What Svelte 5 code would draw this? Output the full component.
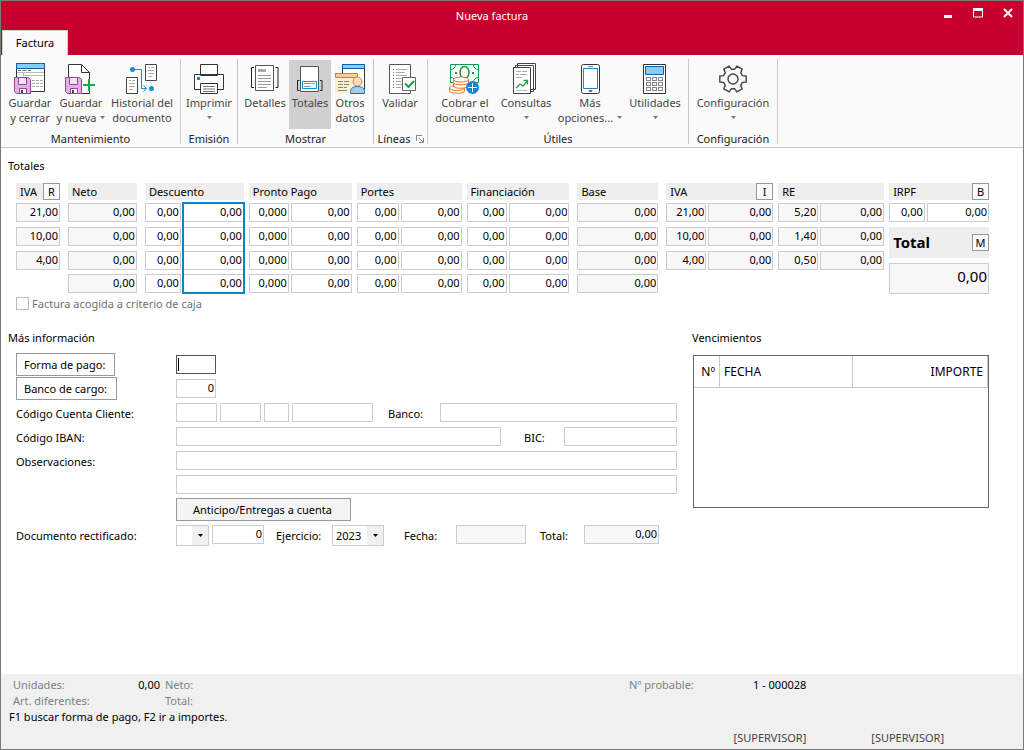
<script>
  const ribbon = [
    { name: 'Mantenimiento', pad: '0 2px 0 3px', items: [
      { icon: 'saveClose', lines: ['Guardar', 'y cerrar'], w: 52 },
      { icon: 'saveNew', lines: ['Guardar', 'y nueva'], w: 50, arrow: true },
      { icon: 'history', lines: ['Historial del', 'documento'], w: 72 }
    ] },
    { name: 'Emisión', pad: '0', items: [
      { icon: 'print', lines: ['Imprimir', ''], w: 56, arrow: true }
    ] },
    { name: 'Mostrar', pad: '0 4px 0 3px', items: [
      { icon: 'details', lines: ['Detalles'], w: 48 },
      { icon: 'totals', lines: ['Totales'], w: 42, active: true },
      { icon: 'other', lines: ['Otros', 'datos'], w: 38 }
    ] },
    { name: 'Líneas', pad: '0 1px 0 0', launcher: true, items: [
      { icon: 'validate', lines: ['Validar'], w: 52 }
    ] },
    { name: 'Útiles', pad: '0 8px 0 0', items: [
      { icon: 'cash', lines: ['Cobrar el', 'documento'], w: 74 },
      { icon: 'reports', lines: ['Consultas', ''], w: 48, arrow: true },
      { icon: 'phone', lines: ['Más', 'opciones...'], w: 80, arrow: true },
      { icon: 'calc', lines: ['Utilidades', ''], w: 50, arrow: true }
    ] },
    { name: 'Configuración', pad: '0', items: [
      { icon: 'gear', lines: ['Configuración', ''], w: 88, arrow: true }
    ] }
  ];

  const zeros = ['0,00', '0,00', '0,00', '0,00'];
  const groups = [
    { title: 'IVA', key: 'R', w: 44, cols: [{ w: 44, ro: true, v: ['21,00', '10,00', '4,00'] }] },
    { title: 'Neto', w: 69, wide: true, cols: [{ w: 69, ro: true, v: zeros }] },
    { title: 'Descuento', w: 99, wide: true, cols: [{ w: 36, v: zeros }, { w: 61, v: zeros, marked: true }] },
    { title: 'Pronto Pago', w: 103, cols: [{ w: 40, v: ['0,000', '0,000', '0,000', '0,000'] }, { w: 61, v: zeros }] },
    { title: 'Portes', w: 105, cols: [{ w: 42, v: zeros }, { w: 61, v: zeros }] },
    { title: 'Financiación', w: 103, cols: [{ w: 40, v: zeros }, { w: 61, v: zeros }] },
    { title: 'Base', w: 81, wide: true, cols: [{ w: 81, ro: true, v: zeros }] },
    { title: 'IVA', key: 'I', w: 107, wide: true, cols: [{ w: 40, ro: true, v: ['21,00', '10,00', '4,00'] }, { w: 65, ro: true, v: zeros.slice(1) }] },
    { title: 'RE', w: 106, cols: [{ w: 40, ro: true, v: ['5,20', '1,40', '0,50'] }, { w: 64, ro: true, v: zeros.slice(1) }] },
    { title: 'IRPF', key: 'B', w: 100, total: true, cols: [{ w: 36, v: ['0,00'] }, { w: 63, v: ['0,00'] }] }
  ];

  function gearPath() {
    const pts = [];
    for (let i = 0; i < 6; i++) {
      for (const [r, off] of [[10, -20], [13.5, -13], [13.5, 13], [10, 20]]) {
        const a = ((i * 60 + off) * Math.PI) / 180;
        pts.push(`${(16 + r * Math.cos(a)).toFixed(1)} ${(16 + r * Math.sin(a)).toFixed(1)}`);
      }
    }
    return `M${pts.join('L')}Z`;
  }
  const gear = gearPath();
</script>

{#snippet floppy()}
  <path d="M.5 14.5h14l2 2v14H2.5l-2-2z" fill="#deb4de" stroke="#98429c" />
  <path d="M4.500 14.500h8v7h-8z" fill="#f6e4f6" stroke="#98429c" />
  <path d="M5.500 25.500h7v5h-7z" fill="#fff" stroke="#98429c" />
  <path d="M7 27h2v3H7z" fill="#444" />
{/snippet}

{#snippet icon(name)}
  <svg class="icon" viewBox="0 0 32 32" width="32" height="32" fill="none" aria-hidden="true">
    {#if name === 'saveClose'}
      <path d="M2.500 .5h28v28h-28z" fill="#fff" stroke="#333" />
      <path d="M2.500 .5h28v5h-28z" fill="#90c8f0" stroke="#0a64ac" />
      <path d="M4 7.500h3m1.500 0h4m1.500 0h3" stroke="#777" />
      <path d="M3 9.500h27M9.500 9.500v4M9.500 12.500h20" stroke="#bbb" />
      <path d="M18 17.500h3m1 0h3m1 0h3M18 20.500h3m1 0h3m1 0h3M18 23.500h3m1 0h3m1 0h3" stroke="#aaa" />
      {@render floppy()}
    {:else if name === 'saveNew'}
      <path d="M3.500 14V1.500h13l8 8V30.500H17V14z" fill="#fff" />
      <path d="M3.500 14V1.500h13l8 8V18M16.500 1.500v8h8M17 30.500h7.500V28" stroke="#333" />
      {@render floppy()}
      <path d="M24 16v12M18 22h12" stroke="#1aa64c" stroke-width="2" />
    {:else if name === 'history'}
      <path d="M19.500 1.500h11v16h-11zM.500 14.500h11v16H.500z" fill="#fff" stroke="#444" />
      <path d="M22 4.500h2m1 0h3M22 7.500h6M22 10.500h6M22 13.500h4M3 17.500h2m1 0h3M3 20.500h6M3 23.500h6M3 26.500h4" stroke="#aaa" />
      <path d="M6 6.500h9.500v19h5M17.500 22.500l3 3-3 3" stroke="#0095dc" />
      <circle cx="6.500" cy="6.500" r="2.500" fill="#0095dc" /><circle cx="25.500" cy="25.500" r="2.500" fill="#0095dc" />
    {:else if name === 'print'}
      <path d="M7.500 1.500h17v11h-17zM1.500 11.500h29v15h-29z" fill="#fff" stroke="#333" />
      <path d="M7.500 20.500h17v10h-17z" fill="#fff" stroke="#333" />
      <path d="M10 23.500h12M10 26h12M10 28.500h12" stroke="#777" />
      <path d="M4 14h3v3H4z" fill="#1884cc" />
    {:else if name === 'details'}
      <path d="M6.500 2.500h18v25h-18z" fill="#fff" stroke="#555" />
      <path d="M9 6h8v3H9z" fill="#aaa" />
      <path d="M9 12.500h13M9 15.500h13M9 18.500h13M9 21.500h13M9 24.500h9" stroke="#999" />
      <path d="M5 4.500H2.500v20H5M26.500 4.500H29v20h-2.500" stroke="#222" />
    {:else if name === 'totals'}
      <path d="M6.500 3.500h18v25h-18z" fill="#fff" stroke="#555" />
      <path d="M8.500 18.500h14v7h-14z" fill="#fff" stroke="#0098dc" />
      <path d="M10 20.500h11M10 23.500h7" stroke="#999" />
      <path d="M5.500 17.500h-2v10h2M26 17.500h2v10h-2" stroke="#222" />
    {:else if name === 'other'}
      <path d="M8.500 1.500h22v25h-22z" fill="#fff" stroke="#333" />
      <path d="M8.500 1.500h22v4h-22z" fill="#90c8f0" stroke="#0a64ac" />
      <path d="M1 10h23v20H1z" fill="#fcf0d0" />
      <path d="M1.500 10.500h22v4h-22z" fill="#fccb90" stroke="#e07828" />
      <path d="M4 18.500h5m1 0h5M4 21.500h5m1 0h5M4 24.500h5m1 0h3M4 27.500h9" stroke="#8a8474" />
      <path d="M16.500 30.500v-2c0-3 2.500-5 7-5s7 2 7 5v2z" fill="#a4ccec" stroke="#1670b4" />
      <circle cx="23.500" cy="18.500" r="4.500" fill="#fcdcb8" stroke="#c08860" />
    {:else if name === 'validate'}
      <path d="M5.500 1.500h21v29h-21z" fill="#fff" stroke="#555" />
      <path d="M9 6.500h1M9 15.500h1M9 24.500h1" stroke="#d03030" />
      <path d="M9 9.500h1M9 12.500h1M9 18.500h1M9 21.500h1" stroke="#28a050" />
      <path d="M12 6.500h11M12 9.500h9M12 12.500h11M12 15.500h6M12 18.500h5M12 21.500h6M12 24.500h5" stroke="#aaa" />
      <path d="M18.500 14.500h13v13h-13z" fill="#fff" stroke="#666" />
      <path d="M21 20.500l3.500 3.500 5.500-6" stroke="#18a048" stroke-width="2" />
    {:else if name === 'cash'}
      <path d="M1.500 1.500h28v18h-28z" fill="#fff" stroke="#129848" />
      <path d="M1.500 6.500c3 0 5-2 5-5M29.500 6.500c-3 0-5-2-5-5M1.500 14.500c3 0 5 2 5 5M29.500 14.500c-3 0-5 2-5 5" stroke="#129848" />
      <ellipse cx="15.500" cy="9.500" rx="4.500" ry="6" stroke="#129848" stroke-width="1.500" />
      <path d="M6 9h2v2H6zM23 9h2v2h-2z" fill="#129848" />
      <g fill="#fff" stroke="#ec7424">
        <path d="M.500 25v3c0 3 15 3 15 0v-3z" /><ellipse cx="8" cy="25" rx="7.500" ry="2.500" />
        <path d="M4.500 20.500v2.500c0 3 14 3 14 0v-2.500z" /><path d="M4.500 16.500v3c0 3 15 3 15 0v-3z" />
        <ellipse cx="12" cy="16.500" rx="7.500" ry="2.500" />
      </g>
      <circle cx="23.500" cy="24.500" r="6.500" fill="#1884cc" />
      <path d="M23.500 20v9M19 24.500h9" stroke="#fff" />
    {:else if name === 'reports'}
      <path d="M7.500 .5h18v26h-18zM5.500 2.500h18v26h-18z" fill="#fff" stroke="#444" />
      <path d="M3.500 4.500h17v26h-17z" fill="#fff" stroke="#444" />
      <path d="M6 8.500h5m1 0h5M6 11.500h3m1 0h7M6 14.500h6" stroke="#aaa" />
      <path d="M6 25l4-4 3 2 4.500-5M13.500 17.500h4v4" stroke="#22a03c" stroke-width="1.300" />
      <path d="M6 27.500h11" stroke="#bbb" />
    {:else if name === 'phone'}
      <rect x="7.500" y="1.500" width="18" height="29" rx="2" fill="#fff" stroke="#333" />
      <path d="M9.500 5.500h14v20h-14z" stroke="#1884cc" />
      <path d="M14 3.500h5" stroke="#888" /><path d="M15 27.500h3v1h-3z" stroke="#777" />
    {:else if name === 'calc'}
      <path d="M4.500 1.500h22v29h-22z" fill="#fff" stroke="#333" />
      <path d="M6.500 3.500h18v8h-18z" fill="#90c8f0" stroke="#0a64ac" />
      {#each [14.5, 19.5, 24.5] as y}
        {#each [7.5, 13.5, 19.5] as x}
          <rect {x} {y} width="4" height="3" stroke="#888" />
        {/each}
      {/each}
    {:else if name === 'gear'}
      <path d={gear} stroke="#444" stroke-width="1.400" stroke-linejoin="round" />
      <circle cx="16" cy="16" r="5" stroke="#444" stroke-width="1.400" />
    {/if}
  </svg>
{/snippet}

{#snippet dropArrow()}
  <svg class="arrow" viewBox="0 0 5 3" width="5" height="3" aria-hidden="true"><path d="M0 0h5L2.500 3z" fill="currentColor" /></svg>
{/snippet}

<div class="window">
  <header>
    <div class="titlebar">
      <h1>Nueva factura</h1>
      <div class="controls">
        <button aria-label="Minimizar"><svg viewBox="0 0 10 10" width="10" height="10"><path d="M1 8.500h8" stroke="#fff" stroke-width="3" /></svg></button>
        <button aria-label="Maximizar"><svg viewBox="0 0 10 10" width="10" height="10"><path d="M.5 1h9v8h-9z" fill="none" stroke="#fff" /><path d="M0 1.500h10" stroke="#fff" stroke-width="3" /></svg></button>
        <button aria-label="Cerrar"><svg viewBox="0 0 10 10" width="10" height="10"><path d="M1 1l8 8M9 1L1 9" stroke="#fff" stroke-width="2" /></svg></button>
      </div>
    </div>
    <nav><button class="tab">Factura</button></nav>
  </header>

  <div class="ribbon">
    {#each ribbon as g}
      <section class="rgroup">
        <div class="tools" style:padding={g.pad}>
          {#each g.items as t}
            <button class="tool" class:active={t.active} style:width="{t.w}px">
              {@render icon(t.icon)}
              {#each t.lines as line, i}
                <span class="line">{line}{#if t.arrow && i === 1}{@render dropArrow()}{/if}</span>
              {/each}
            </button>
          {/each}
        </div>
        <div class="rname">
          {g.name}
          {#if g.launcher}
            <button class="launcher" aria-label="Opciones de líneas">
              <svg viewBox="0 0 8 8" width="8" height="8" fill="none"><path d="M.5 6V.500H6M3 3l4 4M7.500 3v4.500H3" stroke="#888" /></svg>
            </button>
          {/if}
        </div>
      </section>
    {/each}
  </div>

  <main>
    <h2>Totales</h2>
    <div class="totals">
      {#each groups as g}
        <div class="tgroup" class:wide={g.wide} style:flex-grow={g.w}>
          <div class="thead">
            <span>{g.title}</span>
            {#if g.key}<button class="key">{g.key}</button>{/if}
          </div>
          <div class="cols">
            {#each g.cols as c, ci}
              <div class="col" class:marked={c.marked} style:flex-grow={c.w}>
                {#each c.v as v, ri}
                  <input class="num" value={v} readonly={c.ro} aria-label="{g.title} {ri + 1}.{ci + 1}" />
                {/each}
              </div>
            {/each}
          </div>
          {#if g.total}
            <div class="grand"><label for="grand">Total</label><button class="key">M</button></div>
            <input id="grand" class="num big" value="0,00" readonly />
          {/if}
        </div>
      {/each}
      <label class="check"><input type="checkbox" disabled />Factura acogida a criterio de caja</label>
    </div>

    <div class="lower">
      <section class="info">
        <h2>Más información</h2>
        <div class="row">
          <div class="lab"><button class="btn">Forma de pago:</button></div>
          <div class="fields"><input class="w40 current" aria-label="Forma de pago" /></div>
        </div>
        <div class="row">
          <div class="lab"><button class="btn">Banco de cargo:</button></div>
          <div class="fields"><input class="w40 num" value="0" aria-label="Banco de cargo" /></div>
        </div>
        <div class="row">
          <label class="lab" for="ccc">Código Cuenta Cliente:</label>
          <div class="fields">
            <input id="ccc" class="w41" /><input class="w41" aria-label="Sucursal" /><input class="w25" aria-label="Dígito de control" /><input class="w81" aria-label="Cuenta" />
            <label class="mid banco" for="banco">Banco:</label><input id="banco" class="grow" />
          </div>
        </div>
        <div class="row">
          <label class="lab" for="iban">Código IBAN:</label>
          <div class="fields"><input id="iban" class="grow" /><label class="mid bic" for="bic">BIC:</label><input id="bic" class="w113" /></div>
        </div>
        <div class="row">
          <label class="lab" for="obs">Observaciones:</label>
          <div class="fields"><input id="obs" class="grow" /></div>
        </div>
        <div class="row">
          <div class="lab"></div>
          <div class="fields"><input class="grow" aria-label="Observaciones, segunda línea" /></div>
        </div>
        <div class="row action">
          <div class="lab"></div>
          <div class="fields"><button class="btn filled">Anticipo/Entregas a cuenta</button></div>
        </div>
        <div class="row">
          <label class="lab" for="serie">Documento rectificado:</label>
          <div class="fields">
            <span class="combo w33"><select id="serie"><option></option></select><span class="drop">{@render dropArrow()}</span></span>
            <input class="w52 num" value="0" aria-label="Número de documento" />
            <label class="mid ejer" for="ejer">Ejercicio:</label>
            <span class="combo w52"><select id="ejer"><option>2023</option></select><span class="drop">{@render dropArrow()}</span></span>
            <label class="mid fecha" for="fecha">Fecha:</label><input id="fecha" class="w70" readonly />
            <label class="mid tot" for="tot">Total:</label><input id="tot" class="w75 num" value="0,00" readonly />
          </div>
        </div>
      </section>

      <section class="due">
        <h2>Vencimientos</h2>
        <div class="frame">
          <table>
            <thead><tr><th class="n">Nº</th><th class="f">FECHA</th><th class="i">IMPORTE</th></tr></thead>
          </table>
        </div>
      </section>
    </div>
  </main>

  <footer>
    <div class="stats">
      <span class="pair">Unidades:<b>0,00</b></span><span>Neto:</span><span>Nº probable:</span><b>1 - 000028</b>
      <span class="pair">Art. diferentes:</span><span>Total:</span>
    </div>
    <p>F1 buscar forma de pago, F2 ir a importes.</p>
    <div class="users"><span>[SUPERVISOR]</span><span>[SUPERVISOR]</span></div>
  </footer>
</div>

<style>
  :global(body) { margin: 0; background: #fff; }
  .window {
    box-sizing: border-box; min-height: 100vh; display: flex; flex-direction: column;
    border: 1px solid #7a7a7a; background: #fff; color: #000;
    font-family: "Noto Sans", "Open Sans", sans-serif; font-size: 11px; line-height: 15px;
  }
  button, input, select { font: inherit; color: inherit; box-sizing: border-box; margin: 0; padding: 0; border-radius: 0; outline: none; }
  h1, h2, p { margin: 0; font-size: 11px; font-weight: 400; }
  b { font-weight: 400; color: #000; }

  header { background: #c8002d; }
  .titlebar { display: grid; grid-template-columns: 1fr auto 1fr; height: 29px; }
  h1 { grid-column: 2; color: #fff; line-height: 29px; margin-right: 40px; }
  .controls { display: flex; justify-content: flex-end; gap: 20px; padding: 7px 10px 0 0; }
  .controls button { width: 10px; height: 10px; border: 0; background: none; display: flex; }
  nav { display: flex; padding-left: 1px; }
  .tab { width: 66px; height: 25px; border: 1px solid #d0d0d0; border-bottom: 0; background: #fafafa; padding-bottom: 2px; }

  .ribbon { display: flex; background: #fafafa; border-bottom: 1px solid #c6c6c6; padding: 4px 0 3px; }
  .rgroup { border-right: 1px solid #c8c8c8; padding-top: 1px; }
  .tools { display: flex; height: 69px; }
  .tool {
    border: 0; background: none; display: flex; flex-direction: column; align-items: center;
    padding-top: 3px; color: #444; white-space: nowrap; flex: none;
  }
  .tool.active { background: #d0d0d0; }
  .icon { flex: none; }
  .line { display: flex; align-items: center; justify-content: center; gap: 4px; height: 15px; }
  .arrow { flex: none; }
  .tool .arrow { color: #777; }
  .rname { display: flex; justify-content: center; align-items: center; gap: 5px; margin-top: 4px; line-height: 11px; color: #222; }
  .launcher { border: 0; background: none; width: 8px; height: 8px; display: flex; }

  main { flex: 1; padding: 10px 34px 0 7px; }
  .totals { display: flex; flex-wrap: wrap; padding: 10px 0 0 8px; }
  .tgroup { flex-basis: 0; min-width: 0; margin-left: 5px; }
  .tgroup:first-child { margin-left: 0; }
  .tgroup.wide { margin-left: 8px; }
  .thead { display: flex; justify-content: space-between; align-items: center; height: 17px; padding-left: 4px; margin-bottom: 3px; background: #eee; white-space: nowrap; }
  .key { width: 17px; height: 17px; border: 1px solid #999; background: #fafafa; line-height: 14px; }
  .cols { display: flex; gap: 2px; }
  .col { flex-basis: 0; min-width: 0; display: grid; grid-template-rows: 24px 24px 23px 19px; align-items: start; }
  .tgroup:last-of-type .col { grid-template-rows: 24px; }
  .marked { outline: 2px solid #0a84c8; outline-offset: -1px; }
  input { height: 19px; border: 1px solid #ccc; background: #fff; min-width: 0; }
  input[readonly] { background: #f7f7f7; }
  .num { text-align: right; padding: 0 1px 2px 0; }
  .col .num { width: 100%; }
  .grand { display: flex; align-items: center; justify-content: space-between; height: 31px; padding-left: 4px; margin-bottom: 5px; background: #eee; font-size: 15px; font-weight: 700; }
  .grand .key { font-size: 11px; font-weight: 400; }
  .big { width: 100%; height: 31px; font-size: 15px; padding-bottom: 6px; }
  .check { flex: 1 0 100%; display: flex; align-items: center; gap: 3px; height: 15px; margin-top: 2px; color: #707070; }
  .check input { appearance: none; width: 13px; height: 13px; border: 1px solid #bbb; }

  .lower { display: flex; gap: 15px; padding-top: 19px; }
  .info { flex: 501 1 0; min-width: 669px; }
  .row { display: flex; height: 24px; padding-left: 8px; }
  .info h2 { margin-bottom: 8px; }
  .lab { width: 160px; flex: none; line-height: 25px; }
  .fields { flex: 1; display: flex; align-items: flex-start; padding-top: 2px; gap: 3px; min-width: 0; }
  .btn { height: 23px; border: 1px solid #999; background: #fff; padding: 0 9px 0 7px; line-height: 20px; display: block; }
  .btn.filled { width: 175px; background: #f4f4f4; }
  .row.action { height: 26px; }
  .action .fields { padding-top: 1px; }
  .mid { line-height: 21px; white-space: nowrap; margin-left: 12px; }
  .banco, .fecha { width: 49px; }
  .ejer { width: 53px; margin-left: 9px; }
  .fecha { margin-left: 17px; }
  .bic { width: 37px; margin-left: 20px; }
  .tot { width: 41px; margin-left: 11px; }
  .grow { flex: 1; }
  .w25 { width: 25px; } .w33 { width: 33px; } .w40 { width: 40px; } .w41 { width: 41px; }
  .w52 { width: 52px; } .w70 { width: 70px; } .w75 { width: 75px; } .w81 { width: 81px; } .w113 { width: 113px; }
  .current { border-color: #555; caret-color: transparent; background: linear-gradient(#000, #000) 1px 2px / 1px 13px no-repeat #fff; }
  .combo { position: relative; height: 21px; flex: none; }
  .combo select { appearance: none; width: 100%; height: 21px; border: 1px solid #ccc; background: #fff; padding-left: 3px; display: block; }
  .drop { position: absolute; top: 1px; right: 1px; bottom: 1px; width: 16px; background: #f0f0f0; display: flex; align-items: center; justify-content: center; pointer-events: none; }

  .due { flex: 296 1 0; min-width: 0; }
  .frame { height: 151px; border: 1px solid #666; margin: 10px 0 0 1px; }
  table { width: 100%; border-collapse: collapse; table-layout: fixed; font-size: 12px; }
  th { height: 31px; font-weight: 400; text-align: left; padding: 0 4px; border-right: 1px solid #c8c8c8; border-bottom: 1px solid #c8c8c8; }
  th.n { width: 17px; text-align: right; }
  th.f { width: 124px; }
  th.i { text-align: right; }

  footer { background: #f0f0f0; padding: 3px 79px 4px 8px; }
  .stats { display: grid; grid-template-columns: 148px 468px 124px 1fr; grid-auto-rows: 16px; padding-left: 4px; color: #808080; }
  .pair { display: flex; justify-content: space-between; padding-right: 1px; }
  .stats span:nth-child(2), .stats span:last-child { padding-left: 4px; }
  p { line-height: 16px; }
  .users { display: flex; justify-content: flex-end; gap: 65px; margin-top: 5px; color: #444; }
</style>
